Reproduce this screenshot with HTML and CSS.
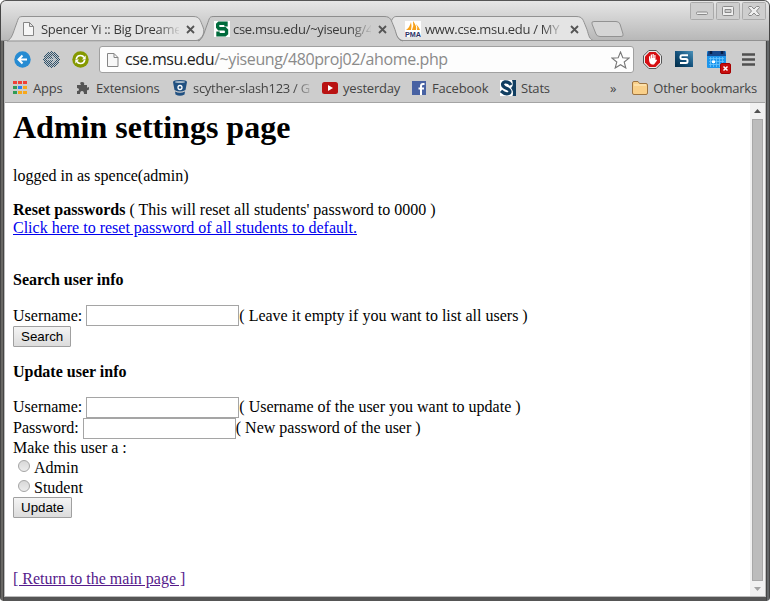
FILE: index.html
```html
<!DOCTYPE html>
<html lang="en">
<head>
<meta charset="utf-8">
<title>Admin settings page</title>
<link rel="stylesheet" href="styles.css">
</head>
<body>
<div class="window">
  <header class="titlebar">
    <div class="tab first">
      <svg class="shape" width="202" height="26" viewBox="0 0 202 26"><path d="M0 25C5 23 6 17 9 9S11 .5 17 .5H186C193 .5 193 4 196 11S193 24.500 189 24.500Z" fill="#e4e4e4" stroke="#929292"/></svg>
      <svg class="fav" width="16" height="16" viewBox="0 0 16 16"><path d="M2.500 1.500H8.500L12.500 5.500V14.500H2.500ZM8.500 1.500V5.500H12.500" fill="#f6f6f6" stroke="#858585"/></svg>
      <span class="label">Spencer Yi :: Big Dreame</span><svg class="close" width="9" height="9" viewBox="0 0 9 9"><path d="M1 1L8 8M8 1L1 8"/></svg>
    </div>
    <div class="tab active">
      <svg class="shape" width="206" height="27" viewBox="0 0 206 27"><path d="M-1 26C4 23 5 17 8 9S10 .5 16 .5H185C192 .5 192 4 195 11S197 23 204 26Z" fill="#cdcdcd"/><path d="M-1 25C4 23 5 17 8 9S10 .5 16 .5H185C192 .5 192 4 195 11S197 23 204 25" fill="none" stroke="#8d8d8d"/></svg>
      <svg class="fav" width="16" height="16" viewBox="0 0 16 16"><rect width="16" height="16" fill="#fff"/><path d="M12 5.500V2.200H5L3.700 3.500V6.200L5 7.800H11L12.500 9.300V12.500L11 13.800H4V10.500" fill="none" stroke="#006b3c" stroke-width="3.400"/></svg>
      <span class="label">cse.msu.edu/~yiseung/4</span><svg class="close" width="9" height="9" viewBox="0 0 9 9"><path d="M1 1L8 8M8 1L1 8"/></svg>
    </div>
    <div class="tab third">
      <svg class="shape" width="210" height="26" viewBox="0 0 210 26"><path d="M6 6C8 1 9 .5 12 .5H191C198 .5 198 4 201 11S203 22 208 24.500H18C13 24.500 10 18 6 6Z" fill="#e4e4e4" stroke="#929292"/></svg>
      <svg class="fav" width="16" height="16" viewBox="0 0 16 16"><rect width="16" height="16" fill="#fff"/><path d="M1 9Q5 6 6 1Q7 5 6 9ZM7 9Q9 5 8 0Q12 5 11 9ZM12 9Q13 6 11 3Q14 6 15 9Z" fill="#f7a11a"/><text x="0" y="16" class="pma" textLength="16" lengthAdjust="spacingAndGlyphs">PMA</text></svg>
      <span class="label">www.cse.msu.edu / MY</span><svg class="close" width="9" height="9" viewBox="0 0 9 9"><path d="M1 1L8 8M8 1L1 8"/></svg>
    </div>
    <svg class="newtab" width="34" height="18" viewBox="0 0 34 18"><path d="M3 .5H25Q28 .5 29 3L32 13Q33 15.500 30 15.500H9Q6 15.500 5 13L1 3Q0 .5 3 .5Z" fill="#d5d5d5" stroke="#929292"/></svg>
    <div class="controls">
      <svg width="24" height="18" viewBox="0 0 24 18"><rect x=".5" y=".5" width="23" height="17" rx="1" class="box"/><rect x="6.500" y="10" width="11" height="2.500" rx="1" class="glyph"/></svg>
      <svg width="24" height="18" viewBox="0 0 24 18"><rect x=".5" y=".5" width="23" height="17" rx="1" class="box"/><path fill-rule="evenodd" d="M7.500 4.500H16.500Q17.500 4.500 17.500 5.500V12.500Q17.500 13.500 16.500 13.500H7.500Q6.500 13.500 6.500 12.500V5.500Q6.500 4.500 7.500 4.500ZM9 7.500H15V10.500H9Z" class="glyph"/></svg>
      <svg width="24" height="18" viewBox="0 0 24 18"><rect x=".5" y=".5" width="23" height="17" rx="1" class="box"/><path d="M7 4.500H9.500L12 7L14.500 4.500H17L17.500 5.500L14.500 9L17.500 12.500L17 13.500H14.500L12 11L9.500 13.500H7L6.500 12.500L9.500 9L6.500 5.500Z" class="glyph"/></svg>
    </div>
  </header>
  <div class="body">
    <nav class="toolbar">
      <svg width="17" height="17" viewBox="0 0 17 17"><circle cx="8.500" cy="8.500" r="8.200" fill="#268bd2"/><path d="M13 8.500H5M8.500 4.500L4.500 8.500L8.500 12.500" fill="none" stroke="#fff" stroke-width="2"/></svg>
      <svg width="17" height="17" viewBox="0 0 17 17"><defs><pattern id="dots" width="2" height="2" patternUnits="userSpaceOnUse"><rect width="1" height="1" fill="#2d526c"/><rect x="1" y="1" width="1" height="1" fill="#2d526c"/></pattern></defs><circle cx="8.500" cy="8.500" r="8.200" fill="#c6c6c6"/><circle cx="8.500" cy="8.500" r="8.200" fill="url(#dots)" shape-rendering="crispEdges"/><path d="M4 8.500H12M9 5L12.500 8.500L9 12" fill="none" stroke="#d3d7da" stroke-width="1.500" opacity=".7"/></svg>
      <svg width="17" height="17" viewBox="0 0 17 17"><circle cx="8.500" cy="8.500" r="8.200" fill="#859900"/><path d="M4.300 8.200Q5 4.500 8.500 4.500Q11 4.500 12 6.500M12.700 8.800Q12 12.500 8.500 12.500Q6 12.500 5 10.500" fill="none" stroke="#fff" stroke-width="1.700"/><path d="M13.700 4.500V8.500H10ZM3.300 12.500V8.500H7Z" fill="#fff"/></svg>
      <div class="omnibox">
        <svg width="14" height="16" viewBox="0 0 14 16"><path d="M1.500 1.500H8L12 5.500V14.500H1.500ZM8 1.500V5.500H12" fill="#f7f7f7" stroke="#858585"/></svg>
        <span class="url">cse.msu.edu<span>/~yiseung/480proj02/ahome.php</span></span>
        <svg width="19" height="18" viewBox="0 0 19 18"><path d="M9.500 1L11.800 6.700L18 7.100L13.200 11L14.800 17L9.500 13.700L4.200 17L5.800 11L1 7.100L7.200 6.700Z" fill="#fff" stroke="#777" stroke-width="1.100"/></svg>
      </div>
      <svg class="block" width="19" height="19" viewBox="0 0 19 19"><path d="M5.800 .5H13.200L18.500 5.800V13.200L13.200 18.500H5.800L.5 13.200V5.800Z" fill="#eee" stroke="#555"/><path d="M6.400 2H12.600L17 6.400V12.600L12.600 17H6.400L2 12.600V6.400Z" fill="#d60f12"/><path d="M6 6.500V10Q6.500 14 9 14.500H11L14 10.500L13.500 9.500L12.500 10V5H11.300V8H10.800V4H9.500V8H9V4.500H7.700V8.500H7.200V6Z" fill="#fff"/></svg>
      <svg class="stylish" width="18" height="16" viewBox="0 0 18 16"><defs><linearGradient id="blue" x1="0" y1="1" x2="1" y2="0"><stop stop-color="#002a45"/><stop offset=".5" stop-color="#14527d"/><stop offset="1" stop-color="#4b92ba"/></linearGradient></defs><rect width="18" height="16" fill="url(#blue)"/><path d="M13 4.200H7Q5.500 4.200 5.500 5.500V7Q5.500 8 7 8H11Q12.500 8 12.500 9.500V10.500Q12.500 12 11 12H5" fill="none" stroke="#fff" stroke-width="2"/></svg>
      <svg class="calendar" width="24" height="24" viewBox="0 0 24 24"><rect y="1" width="19" height="17" rx="1" fill="#1e96ec"/><path d="M1 1H18L19 6H0Z" fill="#16488c"/><path d="M4 1V4M15 1V4" stroke="#061d44" stroke-width="2.500"/><path d="M2 8.500H17M2 11.500H17M2 14.500H17M3.500 7V17M6.500 7V17M9.500 7V17M12.500 7V17M15.500 7V17" stroke="#69c4ff" stroke-width=".8"/><path d="M5 10.500H8V13H5Z" fill="#fff"/><rect x="13.500" y="13.500" width="10" height="10" rx="1.500" fill="#c80d0d" stroke="#a50000"/><path d="M16.500 16.500L20.500 20.500M20.500 16.500L16.500 20.500" stroke="#fff" stroke-width="1.500"/></svg>
      <svg class="menu" width="13" height="13" viewBox="0 0 13 13"><path d="M0 1.500H13M0 6.500H13M0 11.500H13" stroke="#505050" stroke-width="2.600"/></svg>
    </nav>
    <nav class="bookmarks">
      <svg class="i1" width="14" height="14" viewBox="0 0 14 14"><path d="M0 0H4V3H0ZM5 0H9V3H5ZM10 0H14V3H10Z" fill="#ef4036"/><path d="M0 5H4V8H0ZM0 10H4V13H0Z" fill="#309b55"/><path d="M5 5H9V8H5Z" fill="#2a7ff0"/><path d="M10 5H14V8H10ZM5 10H9V13H5ZM10 10H14V13H10Z" fill="#f7a81c"/></svg>
      <span class="b1">Apps</span>
      <svg class="i2" width="14" height="14" viewBox="0 0 14 14"><path d="M1 4H5Q3 1 6 1T8 4H11V7Q13 5 13 7.500T11 9V13H8Q8 10 6 10T4 13H1V10Q3 10 3 8.500T1 7Z" fill="#555"/></svg>
      <span class="b2">Extensions</span>
      <svg class="i3" width="14" height="16" viewBox="0 0 14 16"><path d="M0 2Q0 0 7 0T14 2L12.500 10Q7 13 1.500 10ZM2 11.500Q7 14 12 11.500L11.500 14.500Q7 17 2.500 14.500Z" fill="#205081"/><ellipse cx="7" cy="2" rx="5" ry="1" fill="#a6b9ca"/><circle cx="7" cy="7.500" r="2" fill="#205081" stroke="#fff" stroke-width="1.300"/></svg>
      <span class="b3">scyther-slash123 / G</span>
      <svg class="i4" width="16" height="12" viewBox="0 0 16 12"><rect width="16" height="12" rx="2.500" fill="#b91212"/><path d="M6 3V9L11 6Z" fill="#fff"/></svg>
      <span class="b4">yesterday</span>
      <svg class="i5" width="14" height="14" viewBox="0 0 14 14"><rect width="14" height="14" fill="#4862a3"/><path d="M12.500 3H11Q9 3 9 5V14M6.500 7.500H12" fill="none" stroke="#fff" stroke-width="2"/></svg>
      <span class="b5">Facebook</span>
      <svg class="i6" width="16" height="16" viewBox="0 0 16 16"><rect width="16" height="16" fill="#fff"/><path d="M11 5Q9 1.500 5 1.800Q1.500 3 3 6Q4 7.500 8 9Q11 11 9.500 13Q6 15.500 1 11" fill="none" stroke="#113e61" stroke-width="3.200"/><path d="M12 0H16V16H12.500Q14 11 11 8Q14 5 12 0Z" fill="#113e61"/></svg>
      <span class="b6">Stats</span>
      <span class="more">»</span>
      <svg class="i7" width="16" height="14" viewBox="0 0 16 14"><path d="M.5 12V2Q.5 .5 2 .5H6L7.500 2.500H14Q15.500 2.500 15.500 4V12Q15.500 13.500 14 13.500H2Q.5 13.500 .5 12Z" fill="#f9d08a" stroke="#9c7442"/><path d="M2 4H14" stroke="#fff0c9"/></svg>
      <span class="other">Other bookmarks</span>
    </nav>
    <div class="viewport">
      <main class="page">
        <h1>Admin settings page</h1>
        <p class="login">logged in as spence(admin)</p>
        <p class="reset"><b>Reset passwords</b> ( This will reset all students' password to 0000 )<br><a href="#">Click here to reset password of all students to default.</a></p>
        <h2 class="search-title">Search user info</h2>
        <form>
          <div class="field"><span>Username:&nbsp;</span><input type="text"><span>( Leave it empty if you want to list all users )</span></div>
          <button class="search" type="button">Search</button>
        </form>
        <h2 class="update-title">Update user info</h2>
        <form>
          <div class="field"><span>Username:&nbsp;</span><input type="text"><span>( Username of the user you want to update )</span></div>
          <div class="field"><span>Password:&nbsp;</span><input type="password"><span>( New password of the user )</span></div>
          <div class="make">Make this user a :</div>
          <label class="option"><input type="radio" name="role">Admin</label>
          <label class="option"><input type="radio" name="role">Student</label>
          <button class="update" type="button">Update</button>
        </form>
        <a class="return" href="#">[ Return to the main page ]</a>
      </main>
      <div class="scrollbar">
        <svg width="15" height="16" viewBox="0 0 15 16"><path d="M4 10H11L7.500 6Z" fill="#505050"/></svg>
        <div class="thumb"></div>
        <svg width="15" height="15" viewBox="0 0 15 15"><path d="M4 6H11L7.500 10Z" fill="#a3a3a3"/></svg>
      </div>
    </div>
  </div>
</div>
</body>
</html>
```
FILE: styles.css
```css
* { box-sizing: border-box; }
body { margin: 0; background: #fff; overflow: hidden; }
svg { display: block; flex: none; }
.window {
  width: 770px; height: 601px; padding: 1px 4px 4px;
  display: flex; flex-direction: column;
  background: linear-gradient(90deg, #454545 0 1px, #696865 1px 3px, #454545 3px 4px, transparent 4px 766px, #454545 766px 767px, #65686a 767px 769px, #454545 769px), #555;
  border-radius: 6px 6px 4px 4px;
  font-family: "Open Sans", "Noto Sans", sans-serif; font-size: 13px; color: #444;
}
.titlebar {
  height: 40px; flex: none; display: flex; margin: 0 -3px; padding: 15px 0 0 6px;
  background: linear-gradient(#e6e6e6, #b8b8b8); border-bottom: 1px solid #929292;
  border-radius: 5px 5px 0 0;
}
.tab { position: relative; width: 192px; height: 26px; flex: none; display: flex; align-items: center; padding-left: 14px; }
.tab.active { z-index: 2; width: 191px; padding-left: 15px; }
.tab.third { z-index: 1; padding-left: 15px; }
.tab .shape { position: absolute; left: 0; top: 0; overflow: visible; }
.tab.third .shape { left: -5px; }
.fav, .label, .close { position: relative; }
.label {
  margin-left: 4px; width: 138px; overflow: hidden; white-space: nowrap; line-height: 20px; color: #3a3a3a; letter-spacing: -0.3px;
  -webkit-mask-image: linear-gradient(90deg, #000 117px, transparent 140px);
}
.close { margin-left: 7px; fill: none; stroke: #555; stroke-width: 1.8; }
.active .label { margin-left: 3px; }
.newtab { margin: 5px 0 0 9px; }
.pma { font: bold 7px "Liberation Sans", sans-serif; fill: #2b2f65; }
.controls { margin: -14px 3px 0 auto; display: flex; gap: 2px; }
.box { fill: #cecece; stroke: #aaa; }
.glyph { fill: #eee; stroke: #8a8a8a; }
.body { flex: 1; min-height: 0; display: flex; flex-direction: column; border: solid #bcbcbc; border-width: 0 1px 1px; background: #cdcdcd; }
.toolbar { height: 35px; flex: none; display: flex; align-items: center; padding: 1px 0 0 9px; }
.toolbar > svg + svg { margin-left: 12px; }
.omnibox { width: 535px; height: 27px; margin: 1px 0 0 10px; background: #fdfdfd; border: 1px solid #a0a0a0; border-radius: 3px; display: flex; align-items: center; padding: 0 3px 0 6px; }
.url { margin: -2px 0 0 5px; flex: 1; font-size: 16px; line-height: 24px; letter-spacing: -0.4px; color: #222; white-space: nowrap; }
.url span { color: #8a8a8a; }
.toolbar > .block { margin-left: 9px; }
.toolbar > .stylish { margin-left: 13px; }
.toolbar > .calendar { margin: 5px 0 0 14px; }
.toolbar > .menu { margin-left: 11px; }
.bookmarks { height: 27px; flex: none; display: flex; align-items: center; padding: 0 8px 2px; border-bottom: 1px solid #a4a4a4; white-space: nowrap; letter-spacing: -0.2px; }
.bookmarks span { line-height: 20px; flex: none; margin-left: 6px; }
.bookmarks .b1 { width: 43px; }
.bookmarks .b2 { width: 77px; }
.bookmarks .b3 { width: 117px; margin-right: 12px; letter-spacing: -0.28px; -webkit-mask-image: linear-gradient(90deg, #000 101px, transparent 122px); }
.bookmarks .b4 { width: 69px; margin-left: 5px; }
.bookmarks .b5 { width: 68px; }
.bookmarks .b6 { margin-left: 5px; }
.bookmarks .more { margin: 0 16px 0 auto; }
.bookmarks .other { margin-left: 5px; }
.viewport { flex: 1; min-height: 0; display: flex; background: #fff; }
.page { flex: 1; padding: 0 8px; font: 16px/18px "Liberation Serif", serif; color: #000; }
h1 { margin: 6px 0 0; font-size: 32px; line-height: 37px; }
p { margin: 0; }
.login { margin-top: 21px; }
.reset { margin-top: 16px; }
a { color: #00e; }
h2 { margin: 0; font-size: 16px; line-height: 18px; }
.search-title { margin-top: 34px; }
.update-title { margin-top: 16px; }
form { margin-top: 16px; }
.field { height: 21px; display: flex; align-items: center; line-height: 18px; }
.update-title + form .field span { margin-bottom: 2px; }
.field input { width: 153px; height: 21px; border: 1px solid #a5a5a5; border-radius: 0; padding: 1px; outline: 0; }
button { display: block; height: 21px; padding: 0 7px; border: 1px solid #a0a0a0; border-radius: 1px; background: linear-gradient(#f4f4f4, #dcdcdc); font: 13.333px "Liberation Sans", sans-serif; color: #000; }
.search { width: 58px; }
.update { width: 59px; }
.make { height: 18px; line-height: 18px; }
.option { display: flex; height: 20px; line-height: 22px; padding-left: 5px; }
.option input { appearance: none; width: 12px; height: 12px; margin: 3px 4px 0 0; border: 1px solid #a5a5a5; border-radius: 50%; background: linear-gradient(#d8d8d8, #ececec); }
.return { display: inline-block; margin-top: 52px; color: #551a8b; }
.scrollbar { width: 15px; background: #f1f1f1; display: flex; flex-direction: column; }
.thumb { flex: 1; margin: 0 2px; background: #bcbcbc; border: 1px solid #a8a8a8; }
```
